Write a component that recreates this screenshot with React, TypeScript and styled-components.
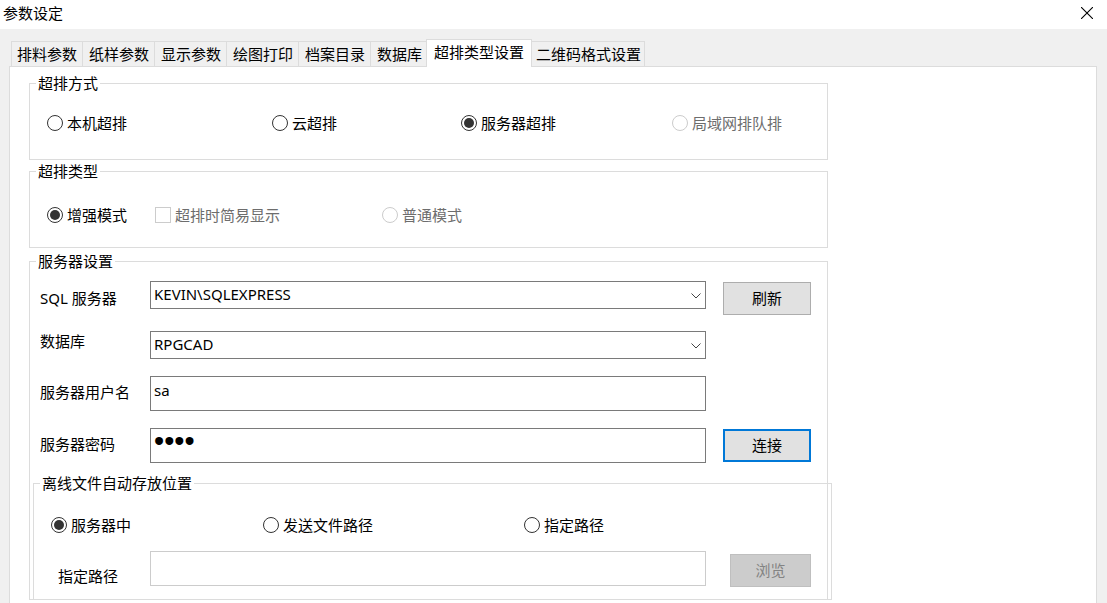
import React, { useState } from 'react';
import styled, { createGlobalStyle, css } from 'styled-components';

const line = '#dcdcdc';
const face = '#f0f0f0';

const GlobalStyle = createGlobalStyle`
  *, *::before, *::after { box-sizing: border-box; }
  body { margin: 0; background: ${face}; }
  body, button, input, select {
    font-family: "Noto Sans", "Noto Sans CJK SC", sans-serif;
    font-size: 15px;
    line-height: 21px;
    color: #000;
  }
`;

const Dialog = styled.main`
  display: flex;
  flex-direction: column;
  min-height: 100vh;
`;

const TitleBar = styled.header`
  display: flex;
  align-items: center;
  justify-content: space-between;
  height: 29px;
  padding: 0 10px 2px 3px;
  background: #fff;
`;

const Title = styled.h1`
  margin: 0;
  font-size: 15px;
  font-weight: 400;
`;

const CloseButton = styled.button`
  display: flex;
  align-items: center;
  justify-content: center;
  width: 20px;
  height: 21px;
  padding: 0 0 1px;
  border: 0;
  background: none;
`;

const Tabs = styled.div`
  display: flex;
  align-items: flex-end;
  height: 37px;
  padding-left: 11px;
`;

const Tab = styled.button<{ $active: boolean }>`
  flex: none;
  height: 25px;
  padding: 0 5px 0 6px;
  border: 1px solid ${line};
  border-width: 1px 0 0 1px;
  background: ${face};
  white-space: nowrap;

  &:first-child { padding-left: 5px; }
  &:last-child { padding-right: 3px; border-right-width: 1px; }

  ${({ $active }) =>
    $active &&
    css`
      position: relative;
      z-index: 1;
      height: 28px;
      margin: 0 -3px -1px -1px;
      padding: 0 7px 2px;
      border-right-width: 1px;
      background: #fff;
    `}
`;

const Panel = styled.section`
  flex: 1;
  margin: 0 10px 0 9px;
  padding: 6px 19px 3px;
  border: 1px solid ${line};
  border-bottom: 0;
  background: #fff;
`;

const Groups = styled.form`
  display: flex;
  flex-direction: column;
  gap: 1px;
  max-width: 799px;
`;

const Group = styled.fieldset`
  min-width: 0;
  margin: 0;
  padding: 0;
  border: 1px solid ${line};
`;

const ServerGroup = styled(Group)`
  margin-top: 2px;
`;

const StorageGroup = styled(Group)`
  margin: 10px -5px -1px 3px;
`;

const Legend = styled.legend`
  margin-left: 6px;
  padding: 0 2px;
`;

const Options = styled.div<{ $columns: string; $top: number; $bottom: number }>`
  display: grid;
  grid-template-columns: ${({ $columns }) => $columns};
  padding: ${({ $top, $bottom }) => `${$top}px 0 ${$bottom}px 17px`};
`;

const OptionLabel = styled.label`
  display: flex;
  align-items: flex-start;
  gap: 4px;
  white-space: nowrap;

  &:has(:disabled) { color: #6d6d6d; }
`;

const Radio = styled.input`
  appearance: none;
  display: grid;
  place-items: center;
  width: 16px;
  height: 16px;
  margin: 2px 0 0;
  border: 1px solid #333;
  border-radius: 50%;
  background: #fff;

  &:checked::before {
    content: '';
    width: 10px;
    height: 10px;
    border-radius: 50%;
    background: #333;
  }
  &:disabled { border-color: #ccc; }
`;

const Checkbox = styled(Radio)`
  border-radius: 0;
  &:checked::before { border-radius: 0; }
`;

const ServerFields = styled.div`
  display: grid;
  grid-template-columns: 110px minmax(0, 1fr) 88px;
  grid-template-rows: 34px 29px 36px 35px;
  row-gap: 16px;
  padding: 9px 16px 0 10px;
`;

const PathFields = styled.div`
  display: grid;
  grid-template-columns: 92px minmax(0, 1fr) 81px;
  grid-template-rows: 36px;
  padding: 0 20px 12px 24px;
`;

const FieldLabel = styled.label<{ $align?: string }>`
  grid-column: 1;
  align-self: ${({ $align = 'center' }) => $align};
`;

const TextLabel = styled(FieldLabel)`
  padding-bottom: 3px;
`;

const TextInput = styled.input`
  grid-column: 2;
  width: 100%;
  height: 35px;
  padding: 0 3px 8px;
  border: 1px solid #7a7a7a;
  border-radius: 0;
  background: #fff;
  outline: 0;

  &:disabled { border-color: #ccc; }
`;

const PasswordInput = styled(TextInput)`
  font-family: "Liberation Sans", sans-serif;
  font-size: 29px;
`;

const SelectBox = styled.div`
  position: relative;
  height: 28px;
`;

const Select = styled.select`
  appearance: none;
  width: 100%;
  height: 28px;
  padding: 0 24px 2px 3px;
  border: 1px solid #7a7a7a;
  border-radius: 0;
  background: #fff;
`;

const Chevron = styled.svg`
  position: absolute;
  top: 12px;
  right: 5px;
  pointer-events: none;
`;

const FieldGap = styled.div<{ $width: number }>`
  grid-column: 2;
  min-width: 0;
  padding-right: ${({ $width }) => $width}px;
`;

const PushButton = styled.button<{ $primary?: boolean }>`
  grid-column: 3;
  align-self: center;
  height: 33px;
  padding: 0;
  border: ${({ $primary }) => ($primary ? '2px solid #0078d7' : '1px solid #adadad')};
  background: #e1e1e1;

  &:disabled {
    border-color: #bfbfbf;
    background: #ccc;
    color: #838383;
  }
`;

const BottomButton = styled(PushButton)`
  align-self: end;
`;

const tabs = [
  '排料参数',
  '纸样参数',
  '显示参数',
  '绘图打印',
  '档案目录',
  '数据库',
  '超排类型设置',
  '二维码格式设置',
];

type OptionProps = {
  name: string;
  text: string;
  disabled?: boolean;
  selected: string;
  onSelect: (value: string) => void;
};

function Option({ name, text, disabled, selected, onSelect }: OptionProps) {
  return (
    <OptionLabel>
      <Radio
        type="radio"
        name={name}
        disabled={disabled}
        checked={selected === text}
        onChange={() => onSelect(text)}
      />
      {text}
    </OptionLabel>
  );
}

function DropDown({ id, value }: { id: string; value: string }) {
  return (
    <SelectBox>
      <Select id={id} defaultValue={value}>
        <option>{value}</option>
      </Select>
      <Chevron width="10" height="6" viewBox="0 0 10 6" fill="none" stroke="#444" aria-hidden="true">
        <path d="M.5 .5 5 5 9.5 .5" />
      </Chevron>
    </SelectBox>
  );
}

export default function App() {
  const [mode, setMode] = useState('服务器超排');
  const [kind, setKind] = useState('增强模式');
  const [storage, setStorage] = useState('服务器中');

  return (
    <Dialog>
      <GlobalStyle />
      <TitleBar>
        <Title>参数设定</Title>
        <CloseButton type="button" aria-label="关闭">
          <svg width="12" height="12" viewBox="0 0 12 12" fill="none" stroke="#000" strokeWidth="1.1">
            <path d="M0 0 12 12M12 0 0 12" />
          </svg>
        </CloseButton>
      </TitleBar>

      <Tabs role="tablist">
        {tabs.map((tab) => {
          const active = tab === '超排类型设置';
          return (
            <Tab key={tab} type="button" role="tab" aria-selected={active} $active={active}>
              {tab}
            </Tab>
          );
        })}
      </Tabs>

      <Panel role="tabpanel">
        <Groups>
          <Group>
            <Legend>超排方式</Legend>
            <Options $columns="225fr 189fr 211fr 155fr" $top={19} $bottom={25}>
              <Option name="mode" text="本机超排" selected={mode} onSelect={setMode} />
              <Option name="mode" text="云超排" selected={mode} onSelect={setMode} />
              <Option name="mode" text="服务器超排" selected={mode} onSelect={setMode} />
              <Option name="mode" text="局域网排队排" disabled selected={mode} onSelect={setMode} />
            </Options>
          </Group>

          <Group>
            <Legend>超排类型</Legend>
            <Options $columns="108fr 227fr 445fr" $top={23} $bottom={21}>
              <Option name="kind" text="增强模式" selected={kind} onSelect={setKind} />
              <OptionLabel>
                <Checkbox type="checkbox" disabled />
                超排时简易显示
              </OptionLabel>
              <Option name="kind" text="普通模式" disabled selected={kind} onSelect={setKind} />
            </Options>
          </Group>

          <ServerGroup>
            <Legend>服务器设置</Legend>
            <ServerFields>
              <FieldLabel htmlFor="server">SQL 服务器</FieldLabel>
              <FieldGap $width={17}>
                <DropDown id="server" value="KEVIN\SQLEXPRESS" />
              </FieldGap>
              <BottomButton type="button">刷新</BottomButton>

              <FieldLabel htmlFor="database" $align="start">数据库</FieldLabel>
              <FieldGap $width={17}>
                <DropDown id="database" value="RPGCAD" />
              </FieldGap>

              <TextLabel htmlFor="user">服务器用户名</TextLabel>
              <FieldGap $width={17}>
                <TextInput id="user" type="text" defaultValue="sa" />
              </FieldGap>

              <TextLabel htmlFor="password">服务器密码</TextLabel>
              <FieldGap $width={17}>
                <PasswordInput id="password" type="password" defaultValue="1234" />
              </FieldGap>
              <PushButton type="button" $primary>连接</PushButton>
            </ServerFields>

            <StorageGroup>
              <Legend>离线文件自动存放位置</Legend>
              <Options $columns="212fr 261fr 307fr" $top={21} $bottom={15}>
                <Option name="storage" text="服务器中" selected={storage} onSelect={setStorage} />
                <Option name="storage" text="发送文件路径" selected={storage} onSelect={setStorage} />
                <Option name="storage" text="指定路径" selected={storage} onSelect={setStorage} />
              </Options>
              <PathFields>
                <FieldLabel htmlFor="path" $align="end">指定路径</FieldLabel>
                <FieldGap $width={24}>
                  <TextInput id="path" type="text" disabled />
                </FieldGap>
                <BottomButton type="button" disabled>浏览</BottomButton>
              </PathFields>
            </StorageGroup>
          </ServerGroup>
        </Groups>
      </Panel>
    </Dialog>
  );
}
